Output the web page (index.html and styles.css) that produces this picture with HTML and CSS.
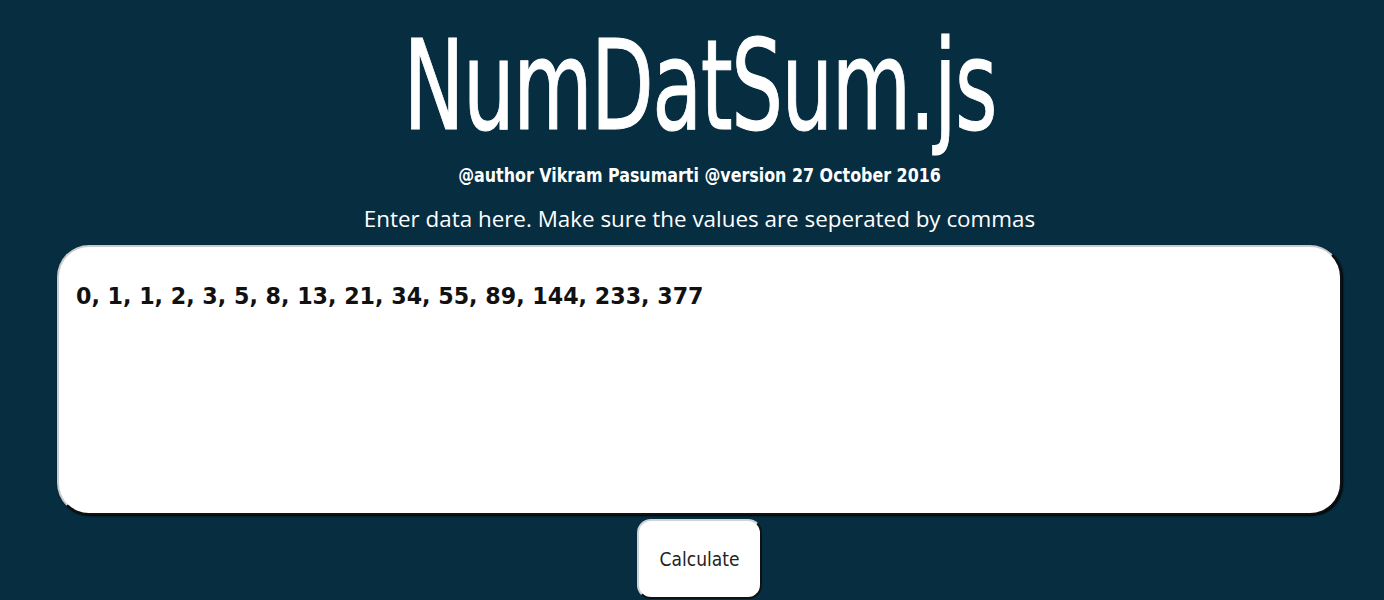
FILE: index.html
```html
<!DOCTYPE html>
<html>
<head>
<meta charset="utf-8">
<link rel="stylesheet" href="styles.css">
</head>
<body>
<div class="page">
  <h1 class="title">NumDatSum.js</h1>
  <p class="byline">@author Vikram Pasumarti @version 27 October 2016</p>
  <p class="prompt">Enter data here. Make sure the values are seperated by commas</p>
  <textarea class="data">0, 1, 1, 2, 3, 5, 8, 13, 21, 34, 55, 89, 144, 233, 377</textarea>
  <button class="calc">Calculate</button>
</div>
</body>
</html>
```
FILE: styles.css
```css
html, body {
  margin: 0;
  padding: 0;
  background: #062d40;
  height: 100%;
  overflow: hidden;
}
.page {
  display: flex;
  flex-direction: column;
  align-items: center;
  padding-left: 15px;
  color: #fff;
  font-family: "Open Sans", "Liberation Sans", sans-serif;
}
.title {
  margin: 22px 0 0;
  font-family: "DejaVu Sans Condensed", sans-serif;
  font-weight: 400;
  font-size: 124px;
  line-height: 128px;
  letter-spacing: -2px;
  transform: scaleX(0.73);
  -webkit-text-stroke: 1px #fff;
}
.byline {
  margin: 13px 0 0;
  font-family: "DejaVu Sans Condensed", sans-serif;
  font-weight: 700;
  font-size: 19px;
  line-height: 24px;
  transform: scaleX(0.93);
}
.prompt {
  margin: 18px 0 0;
  font-size: 22.4px;
  line-height: 28px;
}
.data {
  box-sizing: border-box;
  margin-top: 12px;
  width: 1285px;
  height: 270px;
  border-radius: 32px;
  border: 2px solid #c8ccd0;
  border-right-color: #111;
  border-bottom-color: #111;
  box-shadow: 1px 1px 2px #000;
  padding: 36px 17px;
  resize: none;
  font-family: "DejaVu Sans", sans-serif;
  font-weight: 700;
  font-size: 22.2px;
  color: #111;
  background: #fff;
  outline: none;
}
.calc {
  margin-top: 4px;
  width: 125px;
  height: 80px;
  border-radius: 14px;
  border: 2px solid #d0d4d8;
  border-right-color: #111;
  border-bottom-color: #111;
  background: #fff;
  font-family: "DejaVu Sans Condensed", sans-serif;
  font-size: 19px;
  color: #222;
}
```
